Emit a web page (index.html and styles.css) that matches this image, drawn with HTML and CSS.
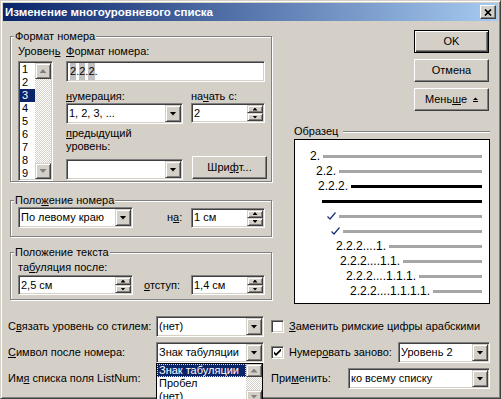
FILE: index.html
```html
<!DOCTYPE html>
<html lang="ru">
<head>
    <meta charset="UTF-8">
    <meta name="viewport" content="width=device-width, initial-scale=1.0">
    <title>Изменение многоуровневого списка</title>
    <link rel="stylesheet" href="styles.css">
</head>
<body>

<div class="window">
    <div class="titlebar">
        <span class="title">Изменение многоуровневого списка</span>
        <span class="close-btn">
            <svg width="8" height="7" viewBox="0 0 8 7"><path d="M1 0.5L7 6.5M7 0.5L1 6.5" stroke="#000" stroke-width="1.7"/></svg>
        </span>
    </div>

    <div class="client">
        <div class="top">
            <div class="left">
                <!-- Формат номера -->
                <fieldset class="group">
                    <legend>Формат номера</legend>
                    <div class="fmt">
                        <div class="level-col">
                            <div class="lbl">Уровен<u>ь</u></div>
                            <div class="listbox">
                                <div class="items">
                                    <div>1</div>
                                    <div>2</div>
                                    <div class="sel">3</div>
                                    <div>4</div>
                                    <div>5</div>
                                    <div>6</div>
                                    <div>7</div>
                                    <div>8</div>
                                    <div>9</div>
                                </div>
                                <div class="vscroll">
                                    <span class="sbtn"><i class="tri-up gray"></i></span>
                                    <span class="track"></span>
                                    <span class="sbtn"><i class="tri-down gray"></i></span>
                                </div>
                            </div>
                        </div>
                        <div class="fmt-col">
                            <div class="lbl"><u>Ф</u>ормат номера:</div>
                            <div class="field"><span class="val"><span class="shade">2</span>.<span class="shade">2</span>.<span class="shade">2</span>.</span></div>
                            <div class="pair">
                                <div class="c1">
                                    <div class="lbl"><u>н</u>умерация:</div>
                                    <div class="combo"><span class="val">1, 2, 3, ...</span><span class="arrow"><i class="tri-down"></i></span></div>
                                </div>
                                <div class="c2">
                                    <div class="lbl">на<u>ч</u>ать с:</div>
                                    <div class="spin"><span class="val">2</span><span class="spinbtns"><span><i class="tri-up sm"></i></span><span><i class="tri-down sm"></i></span></span></div>
                                </div>
                            </div>
                            <div class="pair second">
                                <div class="c1">
                                    <div class="lbl"><u>п</u>редыдущий<br>уровень:</div>
                                    <div class="combo prev"><span class="val"></span><span class="arrow"><i class="tri-down"></i></span></div>
                                </div>
                                <div class="c2 bottom-align">
                                    <span class="btn font-btn">Шри<u>ф</u>т...</span>
                                </div>
                            </div>
                        </div>
                    </div>
                </fieldset>

                <!-- Положение номера -->
                <fieldset class="group g-num">
                    <legend>Поло<u>ж</u>ение номера</legend>
                    <div class="grow">
                        <div class="combo"><span class="val">По левому краю</span><span class="arrow"><i class="tri-down"></i></span></div>
                        <div class="lbl na">н<u>а</u>:</div>
                        <div class="spin"><span class="val">1 см</span><span class="spinbtns"><span><i class="tri-up sm"></i></span><span><i class="tri-down sm"></i></span></span></div>
                    </div>
                </fieldset>

                <!-- Положение текста -->
                <fieldset class="group g-text">
                    <legend>Положение текста</legend>
                    <div class="text-body">
                        <div class="lbl">та<u>б</u>уляция после:</div>
                        <div class="grow">
                            <div class="spin"><span class="val">2,5 см</span><span class="spinbtns"><span><i class="tri-up sm"></i></span><span><i class="tri-down sm"></i></span></span></div>
                            <div class="lbl otst"><u>о</u>тступ:</div>
                            <div class="spin"><span class="val">1,4 см</span><span class="spinbtns"><span><i class="tri-up sm"></i></span><span><i class="tri-down sm"></i></span></span></div>
                        </div>
                    </div>
                </fieldset>
            </div>

            <div class="right">
                <div class="btns">
                    <span class="btn default">OK</span>
                    <span class="btn">Отмена</span>
                    <span class="btn">Мень<u>ш</u>е
                        <svg class="less-icon" width="5" height="5" viewBox="0 0 5 5"><path d="M0 3L2.5 0.5L5 3Z"/><rect x="0" y="4" width="5" height="1"/></svg>
                    </span>
                </div>

                <div class="sample-head">
                    <span>Образец</span>
                    <span class="hline"></span>
                </div>
                <div class="sample">
                    <div class="srow i1"><span class="snum">2.</span><span class="sline"></span></div>
                    <div class="srow i2"><span class="snum">2.2.</span><span class="sline"></span></div>
                    <div class="srow i3"><span class="snum">2.2.2.</span><span class="sline black"></span></div>
                    <div class="srow i4"><span class="sline black"></span></div>
                    <div class="srow i5"><svg class="tick" width="9" height="8" viewBox="0 0 9 8"><path d="M0.5 4.5L3 7L8.5 0.5" fill="none" stroke="#1c2f7a" stroke-width="1.2"/></svg><span class="sline"></span></div>
                    <div class="srow i6"><svg class="tick" width="9" height="8" viewBox="0 0 9 8"><path d="M0.5 4.5L3 7L8.5 0.5" fill="none" stroke="#1c2f7a" stroke-width="1.2"/></svg><span class="sline"></span></div>
                    <div class="srow i7"><span class="snum">2.2.2....1.</span><span class="sline"></span></div>
                    <div class="srow i8"><span class="snum">2.2.2....1.1.</span><span class="sline"></span></div>
                    <div class="srow i9"><span class="snum">2.2.2....1.1.1.</span><span class="sline"></span></div>
                    <div class="srow i10"><span class="snum">2.2.2....1.1.1.1.</span><span class="sline"></span></div>
                </div>
            </div>
        </div>

        <div class="bottom">
            <div class="brow">
                <div class="bl">
                    <span class="lbl">С<u>в</u>язать уровень со стилем:</span>
                    <div class="combo"><span class="val">(нет)</span><span class="arrow"><i class="tri-down"></i></span></div>
                </div>
                <div class="br">
                    <span class="check"></span>
                    <span class="lbl"><u>З</u>аменить римские цифры арабскими</span>
                </div>
            </div>
            <div class="brow">
                <div class="bl">
                    <span class="lbl"><u>С</u>имвол после номера:</span>
                    <div class="combo open">
                        <span class="val">Знак табуляции</span><span class="arrow"><i class="tri-down"></i></span>
                        <div class="dropdown">
                            <div class="ditems">
                                <div class="dsel">Знак табуляции</div>
                                <div>Пробел</div>
                                <div>(нет)</div>
                            </div>
                            <div class="vscroll small">
                                <span class="sbtn"><i class="tri-up gray"></i></span>
                                <span class="track"></span>
                                <span class="sbtn"><i class="tri-down gray"></i></span>
                            </div>
                        </div>
                    </div>
                </div>
                <div class="br">
                    <span class="check">
                        <svg width="7" height="7" viewBox="0 0 7 7"><path d="M0 2L2 4L7 -1V1.5L2 6.5L0 4.5Z" transform="translate(0 0.5)"/></svg>
                    </span>
                    <span class="lbl">Нумер<u>о</u>вать заново:</span>
                    <div class="combo restart"><span class="val">Уровень 2</span><span class="arrow"><i class="tri-down"></i></span></div>
                </div>
            </div>
            <div class="brow">
                <div class="bl">
                    <span class="lbl">Им<u>я</u> списка поля ListNum:</span>
                </div>
                <div class="br">
                    <span class="lbl">При<u>м</u>енить:</span>
                    <div class="combo apply"><span class="val">ко всему списку</span><span class="arrow"><i class="tri-down"></i></span></div>
                </div>
            </div>
        </div>
    </div>
</div>

</body>
</html>
```

FILE: styles.css
```css
* {
    box-sizing: border-box;
}
body {
    margin: 0;
    font: 11px/13px "Liberation Sans", Arial, sans-serif;
    color: #000;
    overflow: hidden;
}
u {
    text-underline-offset: 1px;
}

/* окно */
.window {
    position: relative;
    width: 501px;
    height: 399px;
    padding: 2px;
    background: #d4d0c8;
    border: 1px solid;
    border-color: #d4d0c8 #404040 #404040 #d4d0c8;
    box-shadow: inset 1px 1px #fff, inset -1px -1px #808080;
}
.titlebar {
    display: flex;
    align-items: center;
    height: 18px;
    padding: 0 2px;
    background: linear-gradient(to right, #0a246a, #a6caf0);
}
.title {
    color: #fff;
    font-weight: bold;
    font-size: 11.5px;
}
.close-btn {
    margin-left: auto;
    width: 16px;
    height: 14px;
    display: flex;
    align-items: center;
    justify-content: center;
    background: #d4d0c8;
    border: 1px solid;
    border-color: #fff #404040 #404040 #fff;
    box-shadow: inset -1px -1px #808080;
}
.client {
    padding: 9px 8px 0 5px;
}
.top {
    display: flex;
}
.left {
    width: 263px;
    margin-left: 2px;
}
.right {
    width: 196px;
    margin-left: 21px;
}

/* рамки групп */
.group {
    margin: 0;
    padding: 0;
    min-width: 0;
    width: 262px;
    border: 1px solid #808080;
    box-shadow: inset 1px 1px #fff, 1px 1px #fff;
}
.group legend {
    margin-left: 3px;
    padding: 0 1px;
    background: #d4d0c8;
}
.g-num {
    margin-top: 12px;
}
.g-text {
    margin-top: 9px;
}
.lbl {
    line-height: 13px;
    white-space: nowrap;
}

/* формат номера */
.fmt {
    display: flex;
    padding: 2px 0 0 7px;
}
.level-col {
    width: 35px;
}
.fmt-col {
    width: 199px;
    margin-left: 13px;
}
.level-col .listbox {
    margin-top: 3px;
}
.fmt-col .field {
    margin-top: 3px;
}
.pair {
    display: flex;
    margin-top: 8px;
}
.pair.second {
    margin-top: 3px;
}
.c1 {
    width: 117px;
}
.c2 {
    width: 74px;
    margin-left: 8px;
    display: flex;
    flex-direction: column;
}
.c2 .spin {
    height: 20px;
}
.bottom-align {
    justify-content: flex-end;
    padding-bottom: 1px;
}
.combo.prev {
    margin-top: 6px;
}
.font-btn {
    width: 74px;
    height: 21px;
    margin-left: 1px;
}

/* поля ввода */
.field,
.combo,
.spin,
.listbox {
    display: flex;
    align-items: center;
    height: 21px;
    padding: 1px;
    background: #fff;
    border: 1px solid;
    border-color: #808080 #fff #fff #808080;
    box-shadow: inset 1px 1px #404040, inset -1px -1px #d4d0c8;
}
.val {
    flex: 1;
    padding-left: 1px;
    white-space: nowrap;
    overflow: hidden;
}
.field .val {
    padding-left: 2px;
}
.shade {
    display: inline-block;
    background: #c0c0c0;
    line-height: 17px;
}
.arrow {
    width: 16px;
    align-self: stretch;
    display: flex;
    align-items: center;
    justify-content: center;
    background: #d4d0c8;
    border: 1px solid;
    border-color: #d4d0c8 #404040 #404040 #d4d0c8;
    box-shadow: inset 1px 1px #fff, inset -1px -1px #808080;
}
.spin {
    height: 20px;
}
.spinbtns {
    width: 16px;
    align-self: stretch;
    display: flex;
    flex-direction: column;
}
.spinbtns span,
.sbtn {
    flex: 1;
    display: flex;
    align-items: center;
    justify-content: center;
    background: #d4d0c8;
    border: 1px solid;
    border-color: #d4d0c8 #404040 #404040 #d4d0c8;
    box-shadow: inset 1px 1px #fff, inset -1px -1px #808080;
}
.tri-down,
.tri-up {
    display: block;
    width: 7px;
    height: 4px;
    background: #000;
}
.tri-down {
    clip-path: polygon(0 0, 100% 0, 50% 100%);
}
.tri-up {
    clip-path: polygon(50% 0, 100% 100%, 0 100%);
}
.tri-down.sm,
.tri-up.sm {
    width: 5px;
    height: 3px;
}
.gray {
    background: #808080;
}

/* список уровней */
.listbox {
    height: 120px;
    align-items: stretch;
}
.items {
    flex: 1;
    overflow: hidden;
}
.items div {
    padding-left: 2px;
    line-height: 13px;
}
.items .sel {
    background: #0a246a;
    color: #fff;
}
.vscroll {
    width: 16px;
    display: flex;
    flex-direction: column;
}
.vscroll .sbtn {
    flex: none;
    height: 16px;
}
.track {
    flex: 1;
    background: repeating-conic-gradient(#d4d0c8 0 25%, #fff 0 50%) 0 0 / 2px 2px;
}

/* положение номера и текста */
.grow {
    display: grid;
    grid-template-columns: 115px 58px 74px;
    align-items: center;
}
.g-num .grow {
    padding: 0 0 8px 7px;
}
.na {
    padding-left: 34px;
}
.text-body {
    padding: 2px 0 4px 7px;
}
.text-body .lbl:first-child {
    margin-bottom: 1px;
}
.otst {
    padding-left: 11px;
}

/* кнопки */
.btns {
    display: flex;
    flex-direction: column;
    align-items: flex-end;
    gap: 6px;
    padding-right: 1px;
}
.btn {
    width: 75px;
    height: 23px;
    display: flex;
    align-items: center;
    justify-content: center;
    background: #d4d0c8;
    border: 1px solid;
    border-color: #fff #404040 #404040 #fff;
    box-shadow: inset -1px -1px #808080;
}
.btn.default {
    border-color: #000;
    box-shadow: inset 1px 1px #fff, inset -1px -1px #404040, inset -2px -2px #808080;
}
.less-icon {
    margin-left: 6px;
}

/* образец */
.sample-head {
    display: flex;
    align-items: center;
    margin-top: 14px;
}
.hline {
    flex: 1;
    margin-left: 5px;
    border-top: 1px solid #808080;
    border-bottom: 1px solid #fff;
}
.sample {
    height: 165px;
    margin-top: 1px;
    padding: 9px 7px 0 0;
    background: #fff;
    border: 1px solid #000;
}
.srow {
    display: flex;
    align-items: center;
    height: 15px;
}
.snum {
    font-size: 12px;
}
.sline {
    flex: 1;
    height: 3px;
    margin-left: 3px;
    background: #a6a6a6;
}
.sline.black {
    background: #000;
}
.tick {
    margin-bottom: 2px;
}
.i1 { margin-left: 15px; }
.i2 { margin-left: 21px; }
.i3 { margin-left: 23px; }
.i4 { margin-left: 27px; }
.i4 .sline { margin-left: 0; }
.i5 { margin-left: 32px; }
.i6 { margin-left: 36px; }
.i7 { margin-left: 41px; }
.i8 { margin-left: 45px; }
.i9 { margin-left: 51px; }
.i10 { margin-left: 55px; }

/* нижние строки */
.bottom {
    display: flex;
    flex-direction: column;
    gap: 5px;
    margin-top: 12px;
}
.brow {
    display: flex;
    align-items: center;
    height: 21px;
}
.bl {
    width: 263px;
    display: flex;
    align-items: center;
}
.bl .lbl {
    width: 148px;
}
.bl .combo {
    width: 108px;
}
.br {
    width: 219px;
    display: flex;
    align-items: center;
}
.check {
    width: 13px;
    height: 13px;
    margin-right: 5px;
    display: flex;
    align-items: center;
    justify-content: center;
    background: #fff;
    border: 1px solid;
    border-color: #808080 #fff #fff #808080;
    box-shadow: inset 1px 1px #404040, inset -1px -1px #d4d0c8;
}
.combo.restart {
    width: 92px;
    margin-left: auto;
}
.combo.apply {
    width: 142px;
    margin-left: auto;
}

/* раскрытый список */
.combo.open {
    position: relative;
}
.dropdown {
    position: absolute;
    left: -1px;
    top: calc(100% + 1px);
    width: 107px;
    display: flex;
    background: #fff;
    border: 1px solid #000;
}
.ditems {
    flex: 1;
}
.ditems div {
    padding-left: 2px;
    line-height: 13px;
    white-space: nowrap;
}
.ditems .dsel {
    background: #0a246a;
    color: #fff;
    outline: 1px dotted #f0e68c;
    outline-offset: -1px;
}
.vscroll.small .sbtn {
    height: 13px;
}
```
